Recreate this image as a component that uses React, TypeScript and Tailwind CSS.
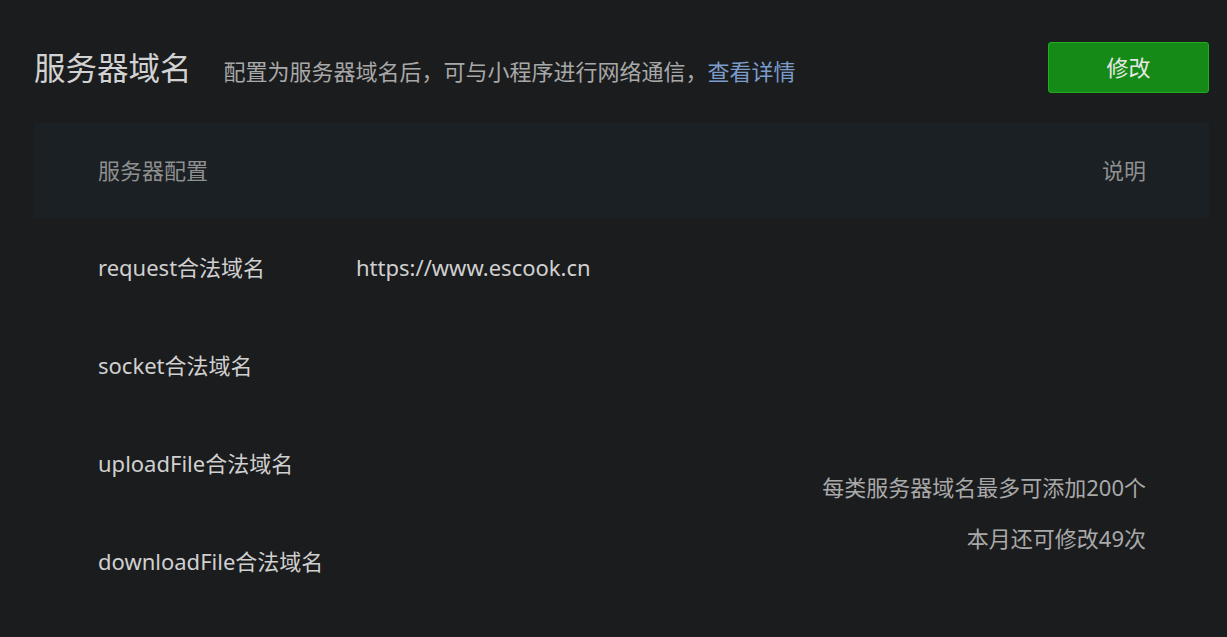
const font = "font-['Noto_Sans','Noto_Sans_CJK_SC',sans-serif]";

const rows = [
  { label: 'request合法域名', value: 'https://www.escook.cn' },
  { label: 'socket合法域名', value: '' },
  { label: 'uploadFile合法域名', value: '' },
  { label: 'downloadFile合法域名', value: '' },
];

export default function App() {
  return (
    <div className={`min-h-[637px] w-full bg-[#1b1c1e] pl-[34px] pr-[18px] pt-[42px] ${font}`}>
      {/* Header */}
      <div className="flex h-[51px] items-center justify-between">
        <div className="flex items-baseline gap-[32px]">
          <h1 className="text-[31.5px] leading-none text-[#d2d2d2]">服务器域名</h1>
          <p className="text-[22px] leading-none text-[#a8a8a8]">
            配置为服务器域名后，可与小程序进行网络通信，
            <a className="text-[#7c9dca]">查看详情</a>
          </p>
        </div>
        <button className="h-[51px] w-[161px] rounded-[3px] border border-[#1fae1f] bg-[#168a17] text-[22px] text-[#e8e8e8]">
          修改
        </button>
      </div>

      {/* Table */}
      <div className="mt-[30px]">
        <div className="flex h-[95px] items-center justify-between bg-[#1a2023] pl-[64px] pr-[63px] text-[22px] text-[#8f8f8f]">
          <span>服务器配置</span>
          <span>说明</span>
        </div>
        <div className="flex">
          <div className="flex-1">
            {rows.map((r) => (
              <div key={r.label} className="flex h-[98px] items-center pl-[64px] text-[22px] text-[#d0d0d0]">
                <span className="w-[258px]">{r.label}</span>
                <span>{r.value}</span>
              </div>
            ))}
          </div>
          <div className="flex flex-col items-end justify-end pb-[46px] pr-[63px] text-[22px] text-[#a9a9a9]">
            <p className="leading-[51px]">每类服务器域名最多可添加200个</p>
            <p className="leading-[51px]">本月还可修改49次</p>
          </div>
        </div>
      </div>
    </div>
  );
}
